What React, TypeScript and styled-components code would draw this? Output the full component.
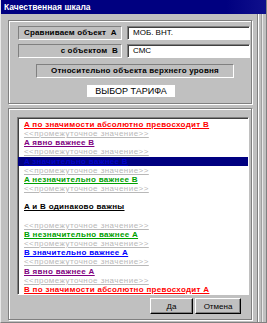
import styled, { createGlobalStyle } from 'styled-components';

const GlobalStyle = createGlobalStyle`
  html, body { margin: 0; padding: 0; background: #c0c0c0; }
  body { font-family: "Liberation Sans", Arial, sans-serif; }
`;

const Window = styled.div`
  width: 267px;
  height: 323px;
  box-sizing: border-box;
  background: #c0c0c0;
  display: flex;
  flex-direction: column;
  border-left: 1px solid #e8e8e8;
  border-right: 1px solid #808080;
  border-bottom: 1px solid #808080;
  overflow: hidden;
`;

const TitleBar = styled.div`
  height: 14px;
  flex: none;
  background: linear-gradient(90deg, #000080, #000080 85%, #10108c);
  color: #fff;
  font-weight: bold;
  font-size: 8.5px;
  line-height: 14px;
  padding-left: 3px;
  white-space: nowrap;
`;

const Body = styled.div`
  flex: 1;
  display: flex;
  min-height: 0;
`;

const Content = styled.div`
  flex: none;
  width: 244px;
  margin-left: 7px;
  display: flex;
  flex-direction: column;
  gap: 4px;
  padding-top: 6px;
`;

const Rail = styled.div`
  flex: 1;
  margin-left: 5px;
  border-left: 1px solid #808080;
  box-shadow: inset 1px 0 #fff;
  display: flex;
  justify-content: flex-end;
  &::after {
    content: '';
    width: 4px;
    border-left: 1px solid #a0a0a0;
    box-shadow: inset 1px 0 #e8e8e8;
  }
`;

const Group = styled.div<{ $h: number }>`
  height: ${(p) => p.$h}px;
  box-sizing: border-box;
  border: 1px solid #808080;
  box-shadow: inset 1px 1px #fff, 1px 1px #fff;
  display: flex;
  flex-direction: column;
`;

const TopGroup = styled(Group)`
  padding: 5px 1px 0 9px;
  gap: 4px;
  align-items: stretch;
`;

const Row = styled.div`
  display: flex;
  gap: 5px;
  height: 14px;
`;

const Sunken = styled.div`
  box-sizing: border-box;
  border-top: 1px solid #808080;
  border-left: 1px solid #808080;
  border-bottom: 1px solid #fff;
  border-right: 1px solid #fff;
`;

const LabelPanel = styled(Sunken)<{ $right?: boolean }>`
  width: 104px;
  font-size: 8px;
  font-weight: bold;
  letter-spacing: 0.15px;
  color: #000;
  line-height: 12px;
  text-align: ${(p) => (p.$right ? 'right' : 'left')};
  padding: 0 3px 0 5px;
  white-space: nowrap;
`;

const Field = styled(Sunken)`
  flex: 1;
  background: #fff;
  box-shadow: inset 1px 1px #404040;
  font-size: 8px;
  line-height: 12px;
  padding-left: 5px;
  color: #000;
  white-space: nowrap;
`;

const CenterPanel = styled(Sunken)`
  align-self: flex-start;
  margin: 2px 0 0 18px;
  width: 198px;
  height: 14px;
  font-size: 8px;
  font-weight: bold;
  letter-spacing: 0.2px;
  text-align: center;
  line-height: 12px;
  white-space: nowrap;
`;

const Tariff = styled.div`
  align-self: flex-start;
  margin: 3px 0 0 69px;
  width: 88px;
  height: 12px;
  background: #fff;
  font-size: 9px;
  line-height: 12px;
  text-align: center;
  white-space: nowrap;
`;

const BottomGroup = styled(Group)`
  padding: 8px 2px 0 8px;
`;

const ListBox = styled(Sunken)`
  height: 178px;
  background: #fff;
  box-shadow: inset 1px 1px #404040;
  padding-top: 2px;
  overflow: hidden;
`;

const Item = styled.div<{ $color: string; $light?: boolean; $selected?: boolean }>`
  height: 9.17px;
  line-height: 9.17px;
  font-size: 8px;
  font-weight: ${(p) => (p.$light ? 'normal' : 'bold')};
  letter-spacing: ${(p) => (p.$light ? '0.45px' : '0.3px')};
  color: ${(p) => p.$color};
  background: ${(p) => (p.$selected ? '#000080' : 'transparent')};
  padding-left: 6px;
  white-space: nowrap;
  & span {
    text-decoration: underline;
  }
`;

const ButtonBar = styled.div`
  display: flex;
  justify-content: flex-end;
  gap: 2px;
  padding: 3px 8px 0 0;
`;

const Button = styled.button<{ $w: number }>`
  width: ${(p) => p.$w}px;
  height: 16px;
  padding: 0;
  background: #c0c0c0;
  font-family: "Liberation Sans", Arial, sans-serif;
  font-size: 8px;
  color: #000;
  border-top: 1px solid #fff;
  border-left: 1px solid #fff;
  border-right: 1px solid #000;
  border-bottom: 1px solid #000;
  box-shadow: inset -1px -1px #808080;
`;

type Entry = { text: string; color: string; light?: boolean; selected?: boolean };

const MID = '<<промежуточное значение>>';
const GRAY = '#b8b8b8';

const entries: Entry[] = [
  { text: 'A по значимости абсолютно превосходит B', color: '#ff0000' },
  { text: MID, color: GRAY, light: true },
  { text: 'A явно важнее B', color: '#800080' },
  { text: MID, color: GRAY, light: true },
  { text: 'A значительно важнее B', color: '#0000c8', selected: true },
  { text: MID, color: GRAY, light: true },
  { text: 'A незначительно важнее B', color: '#00a000' },
  { text: MID, color: GRAY, light: true },
  { text: '', color: '#000' },
  { text: 'A и B одинаково важны', color: '#000' },
  { text: '', color: '#000' },
  { text: MID, color: GRAY, light: true },
  { text: 'B незначительно важнее A', color: '#00a000' },
  { text: MID, color: GRAY, light: true },
  { text: 'B значительно важнее A', color: '#0000ff' },
  { text: MID, color: GRAY, light: true },
  { text: 'B явно важнее A', color: '#800080' },
  { text: MID, color: GRAY, light: true },
  { text: 'B по значимости абсолютно превосходит A', color: '#ff0000' },
];

export default function App() {
  return (
    <>
      <GlobalStyle />
      <Window>
        <TitleBar>Качественная шкала</TitleBar>
        <Body>
          <Content>
            <TopGroup $h={84}>
              <Row>
                <LabelPanel>Сравниваем объект&nbsp; A</LabelPanel>
                <Field>МОБ. ВНТ.</Field>
              </Row>
              <Row>
                <LabelPanel $right>с объектом&nbsp; B</LabelPanel>
                <Field>СМС</Field>
              </Row>
              <CenterPanel>Относительно объекта верхнего уровня</CenterPanel>
              <Tariff>ВЫБОР ТАРИФА</Tariff>
            </TopGroup>
            <BottomGroup $h={212}>
              <ListBox>
                {entries.map((e, i) => (
                  <Item key={i} $color={e.color} $light={e.light} $selected={e.selected}>
                    <span>{e.text}</span>
                  </Item>
                ))}
              </ListBox>
              <ButtonBar>
                <Button $w={43}>Да</Button>
                <Button $w={46}>Отмена</Button>
              </ButtonBar>
            </BottomGroup>
          </Content>
          <Rail />
        </Body>
      </Window>
    </>
  );
}
